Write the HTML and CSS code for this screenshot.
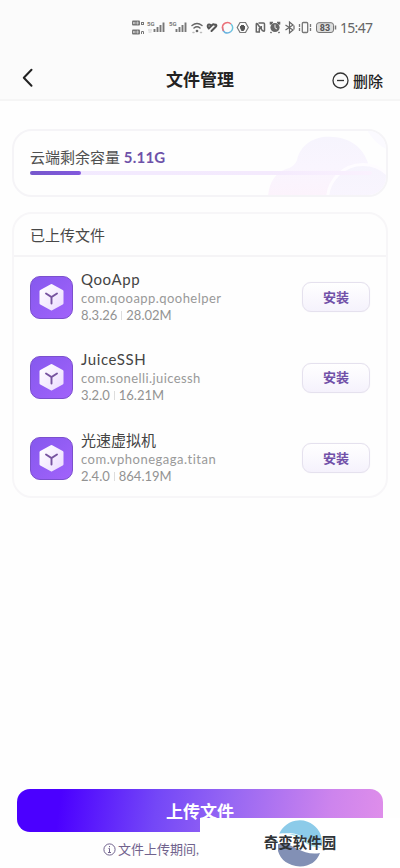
FILE: index.html
```html
<!DOCTYPE html>
<html lang="zh-CN">
<head>
<meta charset="utf-8">
<title>文件管理</title>
<link rel="stylesheet" href="styles.css">
</head>
<body>
<svg class="defs" width="0" height="0" aria-hidden="true">
  <defs>
    <linearGradient id="tile" x1="0" y1="0" x2="1" y2="1"><stop offset="0" stop-color="#8558ee"/><stop offset="1" stop-color="#a263fb"/></linearGradient>
    <linearGradient id="hex" x1="0" y1="0" x2="1" y2="1"><stop offset="0" stop-color="#fff"/><stop offset="1" stop-color="#ecdcff"/></linearGradient>
    <symbol id="app" viewBox="0 0 43 43">
      <rect x=".5" y=".5" width="42" height="42" rx="9.5" fill="url(#tile)" stroke="#7b50cd"/>
      <path d="M21.5 9.500 32 15.200V27.200L21.500 33 11 27.200V15.200Z" fill="url(#hex)" stroke="url(#hex)" stroke-width="3" stroke-linejoin="round"/>
      <path d="M16 17.500 21.500 21 27 17.500M21.500 21V27.500" fill="none" stroke="#76539f" stroke-width="1.900" stroke-linecap="round"/>
    </symbol>
  </defs>
</svg>
<div class="screen">
  <header class="top">
    <div class="status">
      <svg class="status-icons" width="205" height="20" viewBox="132 17 205 20">
        <g fill="#777">
          <rect x="132" y="20.500" width="8" height="5" rx="1"/><rect x="132" y="29.500" width="8" height="5" rx="1"/>
        </g>
        <path d="M133.500 22v2M135 22v2M133.500 23h1.500M137 22h1v2h-1ZM133.500 31v2M135 31v2M133.500 32h1.500M137 31h1v2h-1Z" stroke="#eee" stroke-width=".6" fill="none"/>
        <g fill="none" stroke="#777" stroke-width="1"><rect x="141.500" y="22.500" width="2" height="2"/><path d="M141.500 34v-2.500h2V34"/></g>
        <text x="147" y="26" class="net">5G</text><text x="169" y="26" class="net">5G</text>
        <g stroke="#777" stroke-width="1.900">
          <path d="M154.500 32v-3M157.500 32v-5M160.500 32v-7M163.500 32v-9.500"/>
          <path d="M176.500 32v-3M179.500 32v-5M182.500 32v-7M185.500 32v-9.500"/>
          <path d="M148 30h4M148.500 32h3" stroke="#ccc" stroke-width="1"/>
        </g>
        <g fill="none" stroke="#666" stroke-width="1.500" stroke-linecap="round">
          <path d="M192 25.500q5-4 10 0M194 28q3-2.500 6 0"/><circle cx="197" cy="31" r=".6"/>
          <path d="M193 32.500h1M200.500 32.500h1" stroke="#bbb"/>
        </g>
        <path d="M208 27.500q-1-3 1.200-3 1.500 0 1.300 1.500M208.700 28.500l3.500-3.500q1.500-1.500 2.300-.2M211.500 31l4-4q1.600-1.600.3-2.500" fill="none" stroke="#555" stroke-width="2" stroke-linecap="round"/>
        <g fill="none" stroke-width="1.500"><path d="M222.500 28a5 5 0 0 1 8.500-4" stroke="#eb7078"/><path d="M231 24a5 5 0 0 1 0 7.500" stroke="#69c5df"/><path d="M222.500 28q0 3 2.500 4.500 3 1.300 6-1" stroke="#6ab3df"/><path d="M222.500 27q0 2 1 4" stroke="#eb7078"/></g>
        <path d="M240 22.500h5.500l2.800 5-2.800 5H240l-2.800-5Z" fill="none" stroke="#777" stroke-width="1.200"/>
        <path d="M240 28v-2h1v-1h3v1h1v3l-1.500 2h-2Z" fill="#555"/>
        <path d="M256.300 32.500V24q0-1 1-.3l4 5.300v-3M258.500 23h5q1 0 1 1v6.500q0 1.500-2 .2l-4-5.200M256.300 32h3v-4" fill="none" stroke="#666" stroke-width="1.500"/>
        <circle cx="275" cy="27.500" r="4.600" fill="#666"/><path d="M270.500 24.500v-2h2.500M279.500 24.500v-2h-2.500M271.500 32l-1 1M278.500 32l1 1" stroke="#666" stroke-width="1.600"/><path d="M275 24.500v3.300l2 1.200" fill="none" stroke="#eee" stroke-width="1"/>
        <path d="m285.500 25 7.500 5-3.500 3V22l3.500 3-7.500 5M294 25.500v4" fill="none" stroke="#666" stroke-width="1.200"/>
        <g fill="none" stroke="#777" stroke-width="1.300"><rect x="302.300" y="22.500" width="5.400" height="10" rx="1"/><path d="M299.500 24v7M310.500 24v7" stroke-dasharray="3 1"/></g>
        <rect x="316.500" y="22.700" width="17" height="9.800" rx="2.500" fill="#ddd" stroke="#777"/><path d="M335.500 25.500v4" stroke="#777" stroke-width="1.500"/>
        <text x="325" y="31" text-anchor="middle" class="battery">83</text>
      </svg>
      <span class="clock">15:47</span>
    </div>
    <nav class="nav">
      <svg class="back" width="14" height="20" viewBox="0 0 14 20"><path d="M9.500 1.800 1.800 9.800l7.700 8" fill="none" stroke="#222" stroke-width="2" stroke-linecap="round" stroke-linejoin="round"/></svg>
      <h1>文件管理</h1>
      <div class="delete">
        <svg width="17" height="17" viewBox="0 0 17 17"><circle cx="8.500" cy="8.500" r="7.500" fill="none" stroke="#333" stroke-width="1.300"/><path d="M5 8.500h7" stroke="#333" stroke-width="1.300"/></svg>
        <span>删除</span>
      </div>
    </nav>
  </header>
  <main>
    <section class="card capacity">
      <svg class="cloud" width="123" height="66" viewBox="264 130 123 66">
        <defs>
          <linearGradient id="mist" x1="0" y1="0" x2="0" y2="1"><stop offset="0" stop-color="#f6f4fd"/><stop offset=".5" stop-color="#f9f5fe"/><stop offset="1" stop-color="#fcf3fc"/></linearGradient>
        </defs>
        <path d="M267 196q2-21 18-27c5-1 9-4 11-9 4-18 21-25 36-23 18 1 30 11 35 26v33Z" fill="url(#mist)"/>
        <circle cx="362" cy="200" r="35.500" fill="url(#mist)" stroke="#fefcff" stroke-width="3"/>
        <path d="M366 130h21v20q-13-6-21-20Z" fill="#fbfaff"/>
      </svg>
      <p>云端剩余容量 <strong>5.11G</strong></p>
      <div class="track"><div class="used"></div></div>
    </section>
    <section class="card files">
      <h2>已上传文件</h2>
      <ul>
        <li>
          <svg class="app" width="43" height="43"><use href="#app"/></svg>
          <div class="info"><h3 class="qoo">QooApp</h3><p class="pkg pkg-qoo">com.qooapp.qoohelper</p><p class="meta"><span>8.3.26</span><i></i><span>28.02M</span></p></div>
          <button>安装</button>
        </li>
        <li>
          <svg class="app" width="43" height="43"><use href="#app"/></svg>
          <div class="info"><h3 class="juice">JuiceSSH</h3><p class="pkg pkg-juice">com.sonelli.juicessh</p><p class="meta"><span>3.2.0</span><i></i><span>16.21M</span></p></div>
          <button>安装</button>
        </li>
        <li>
          <svg class="app" width="43" height="43"><use href="#app"/></svg>
          <div class="info"><h3>光速虚拟机</h3><p class="pkg pkg-vphone">com.vphonegaga.titan</p><p class="meta"><span>2.4.0</span><i></i><span>864.19M</span></p></div>
          <button>安装</button>
        </li>
      </ul>
    </section>
  </main>
  <footer>
    <button class="upload">上传文件</button>
    <p class="hint"><svg width="13" height="13" viewBox="0 0 13 13"><circle cx="6.500" cy="6.500" r="5.600" fill="none" stroke="#70628d"/><path d="M5.500 5.500h1v4M5 9.500h3M6.500 3v1.200" fill="none" stroke="#70628d"/></svg><span>文件上传期间,</span></p>
  </footer>
  <div class="watermark">
    <svg width="46" height="47" viewBox="0 0 46 47">
      <path d="M1 17a22.500 22.500 0 0 1 39.500-8Q46 16 45 26C33 24 27 14 13 13Q6 13 1 17Z" fill="#8ccbe9"/>
      <path d="M1 24h7c9 1 19 12 35 9Q38 46 23 46.500 5 45 1 31Z" fill="#8290b5"/>
      <path d="M0 18q5 0 12 2l10 7 20 3 3-2q-8-3-17-9Q16 11 3 15Z" fill="#aadfea"/>
      <path d="M0 14q13-3 26 7 8 7 20 7v4Q31 34 22 28 13 20 0 21Z" fill="#fff"/>
    </svg>
    <span>奇变软件园</span>
  </div>
</div>
</body>
</html>
```

FILE: styles.css
```css
* { box-sizing: border-box; }
body, h1, h2, h3, p, ul { margin: 0; padding: 0; }
body {
  width: 400px;
  height: 868px;
  overflow: hidden;
  background: #fefefe;
  color: #444;
  font-family: Lato, "Noto Sans CJK SC", sans-serif;
}
.defs { position: absolute; }
.screen { position: relative; height: 868px; display: flex; flex-direction: column; }
.top { height: 101px; background: #fbfbfb; border-bottom: 2px solid #f5f5f5; }
.status { height: 54px; padding: 17px 0 0 132px; display: flex; align-items: flex-start; }
.status-icons { flex: none; }
.net { font: 700 6px Roboto, sans-serif; fill: #777; }
.battery { font: 700 9px Roboto, sans-serif; fill: #555; }
.clock { margin-left: 3px; font: 14px/21px "Noto Sans", sans-serif; letter-spacing: -.7px; color: #666; }
.nav { height: 45px; padding: 6px 17px 0 22px; display: grid; grid-template-columns: 1fr auto 1fr; align-items: center; }
.back { margin-top: -3px; }
h1 { font-size: 17px; line-height: 24px; font-weight: 700; color: #222; margin-left: -5px; }
.delete { display: flex; justify-content: flex-end; align-items: center; gap: 4px; font-size: 15px; line-height: 22px; font-weight: 500; color: #222; margin-top: 2px; }
main { padding: 28px 12px 0; }
.card { border: 2px solid #f5f4f7; border-radius: 20px; background: #fefefe; }
.capacity { position: relative; height: 68px; padding: 15px 14px 0 16px; overflow: hidden; }
.cloud { position: absolute; right: -2px; top: -1px; }
.capacity p { position: relative; font-size: 15px; line-height: 22px; color: #505050; white-space: nowrap; }
.capacity strong { font: 700 15px/22px Lato, sans-serif; letter-spacing: .2px; color: #6d51a9; }
.track { position: relative; height: 4px; margin-top: 3px; border-radius: 2px; background: linear-gradient(90deg, #f2eaff, #f4eafd 70%, #faf1fe); }
.used { width: 51px; height: 4px; border-radius: 2px; background: linear-gradient(90deg, #7658cc, #8259dd); }
.files { height: 286px; margin-top: 15px; border-color: #f7f6f8; }
h2 { height: 43px; padding-left: 16px; border-bottom: 2px solid #f5f4f6; font-size: 15px; line-height: 43px; font-weight: 400; color: #484848; }
ul { list-style: none; }
li { height: 80.500px; padding: 0 16px 0 16px; display: flex; align-items: center; }
.app { flex: none; }
.info { flex: 1; margin: -2px 0 0 8px; white-space: nowrap; }
h3 { font-size: 15px; line-height: 20px; font-weight: 400; color: #444; }
.qoo, .juice { letter-spacing: .6px; }
.pkg { font-size: 13px; line-height: 18px; color: #999; }
.pkg-qoo { letter-spacing: .45px; }
.pkg-juice { letter-spacing: .4px; }
.pkg-vphone { letter-spacing: .5px; }
.meta { display: flex; align-items: center; font-size: 13px; line-height: 17px; color: #929292; }
.meta i { width: 1px; height: 9px; margin: 0 4px; background: #ddd; }
li button { width: 68px; height: 30px; padding: 0 0 1px; border: 1.500px solid #e5e1ee; border-radius: 9px; background: linear-gradient(#fff, #f5f2fc); box-shadow: 0 0 1px #e7e3f0; font: 700 13px/26px "Noto Sans CJK SC", sans-serif; color: #7150a8; }
footer { margin-top: auto; height: 79px; padding: 0 17px; }
.upload { display: block; width: 366px; height: 43px; padding: 0; border: 0; border-radius: 13px; background: linear-gradient(98deg, #4b00ff 12%, #7447f7 38%, #9767f3 58%, #cd84ed 85%, #df8eea); color: #fff; font: 700 17px/42px "Noto Sans CJK SC", sans-serif; }
.hint { display: flex; align-items: center; gap: 2px; padding: 7px 0 0 86px; color: #70628d; font-size: 13px; line-height: 20px; }
.watermark { position: absolute; right: 0; bottom: 0; width: 200px; height: 50px; background: #fff; display: grid; place-items: center; }
.watermark > * { grid-area: 1 / 1; }
.watermark span { position: relative; font-size: 14.500px; line-height: 20px; font-weight: 700; color: #303437; }
```
